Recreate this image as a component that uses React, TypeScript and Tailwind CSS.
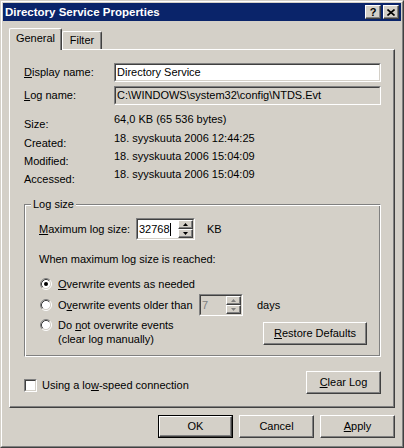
import type { ReactNode } from "react";

function Raised({ children, className = "" }: { children?: ReactNode; className?: string }) {
  return (
    <div
      className={`flex items-center justify-center border border-t-white border-l-white border-r-[#404040] border-b-[#404040] bg-[#d4d0c8] shadow-[inset_-1px_-1px_0_#808080] ${className}`}
    >
      {children}
    </div>
  );
}

function Button({ children, isDefault = false, className = "" }: { children: ReactNode; isDefault?: boolean; className?: string }) {
  if (isDefault) {
    return (
      <div className={`border border-black ${className}`}>
        <Raised className="h-full w-full">{children}</Raised>
      </div>
    );
  }
  return <Raised className={className}>{children}</Raised>;
}

function Sunken({ children, className = "", bg = "bg-white" }: { children?: ReactNode; className?: string; bg?: string }) {
  return (
    <div className={`border border-t-[#808080] border-l-[#808080] border-r-white border-b-white ${className}`}>
      <div className={`h-full w-full border border-t-[#404040] border-l-[#404040] border-r-[#d4d0c8] border-b-[#d4d0c8] ${bg}`}>
        {children}
      </div>
    </div>
  );
}

function Arrow({ up, color }: { up?: boolean; color: string }) {
  return (
    <svg width="5" height="3" viewBox="0 0 5 3">
      <path d={up ? "M2.5 0 L5 3 L0 3 Z" : "M0 0 L5 0 L2.5 3 Z"} fill={color} />
    </svg>
  );
}

function Spin({ value, disabled = false, caret = false, className = "" }: { value: string; disabled?: boolean; caret?: boolean; className?: string }) {
  const c = disabled ? "#808080" : "#000";
  return (
    <Sunken className={className} bg={disabled ? "bg-[#d4d0c8]" : "bg-white"}>
      <div className="flex h-full">
        <div className={`flex flex-1 items-center pl-px ${disabled ? "text-[#808080]" : ""}`}>
          {value}
          {caret && <span className="h-[13px] w-px bg-black" />}
        </div>
        <div className="flex w-[15px] flex-col">
          <Raised className="h-[9px]">
            <Arrow up color={c} />
          </Raised>
          <Raised className="h-[9px]">
            <Arrow color={c} />
          </Raised>
        </div>
      </div>
    </Sunken>
  );
}

function Radio({ checked = false }: { checked?: boolean }) {
  return (
    <svg width="12" height="12" viewBox="0 0 12 12" className="shrink-0">
      <circle cx="6" cy="6" r="4.5" fill="#fff" />
      <path d="M2.11 9.89 A5.5 5.5 0 0 1 9.89 2.11" fill="none" stroke="#808080" />
      <path d="M9.89 2.11 A5.5 5.5 0 0 1 2.11 9.89" fill="none" stroke="#fff" />
      <path d="M2.82 9.18 A4.5 4.5 0 0 1 9.18 2.82" fill="none" stroke="#404040" />
      <path d="M9.18 2.82 A4.5 4.5 0 0 1 2.82 9.18" fill="none" stroke="#d4d0c8" />
      {checked && <circle cx="6" cy="6" r="2" fill="#000" />}
    </svg>
  );
}

const info: [string, string, string][] = [
  ["Size:", "64,0 KB (65 536 bytes)", "h-[19px]"],
  ["Created:", "18. syyskuuta 2006 12:44:25", "h-[18px]"],
  ["Modified:", "18. syyskuuta 2006 15:04:09", "h-[18px]"],
  ["Accessed:", "18. syyskuuta 2006 15:04:09", "h-[19px]"],
];

export default function App() {
  return (
    <div className="h-[448px] w-[404px] border border-t-[#d4d0c8] border-l-[#d4d0c8] border-r-[#404040] border-b-[#404040] bg-[#d4d0c8] font-['Liberation_Sans',Arial,sans-serif] text-[11px] leading-[13px] text-black">
      <div className="flex h-full flex-col border border-t-white border-l-white border-r-[#808080] border-b-[#808080] p-px">
        {/* title bar */}
        <div className="flex h-[18px] items-center bg-[#0a246a] pl-[2px] pr-[2px]">
          <span className="text-[11.5px] font-bold text-white">Directory Service Properties</span>
          <div className="ml-auto flex gap-[2px]">
            <Raised className="h-[14px] w-[16px] text-[11px] font-bold leading-[11px]">?</Raised>
            <Raised className="h-[14px] w-[16px]">
              <svg width="8" height="7" viewBox="0 0 8 7">
                <path d="M0.5 0.5 L7.5 6.5 M7.5 0.5 L0.5 6.5" stroke="#000" strokeWidth="1.6" />
              </svg>
            </Raised>
          </div>
        </div>

        <div className="flex flex-1 flex-col px-[6px] pt-[7px]">
          {/* tabs */}
          <div className="flex h-[21px] items-end">
            <div className="relative z-10 -mb-px flex h-[22px] w-[53px] justify-center rounded-t-[2px] border-l border-t border-r border-l-white border-t-white border-r-[#404040] bg-[#d4d0c8] pt-[3px] shadow-[inset_-1px_0_0_#808080]">
              General
            </div>
            <div className="flex h-[18px] w-[40px] justify-center rounded-t-[2px] border-l border-t border-r border-l-white border-t-white border-r-[#404040] pt-[2px] shadow-[inset_-1px_0_0_#808080]">
              Filter
            </div>
          </div>

          {/* panel */}
          <div className="flex h-[359px] flex-col border border-t-white border-l-white border-r-[#404040] border-b-[#404040] pl-[14px] pr-[13px] pt-[13px] shadow-[inset_-1px_-1px_0_#808080]">
            <div className="flex h-[19px] items-center">
              <span className="w-[90px]">
                <u>D</u>isplay name:
              </span>
              <Sunken className="h-full flex-1">
                <div className="flex h-full items-center pl-px">Directory Service</div>
              </Sunken>
            </div>
            <div className="mt-[4px] flex h-[19px] items-center">
              <span className="w-[90px]">
                <u>L</u>og name:
              </span>
              <Sunken className="h-full flex-1" bg="bg-[#d4d0c8]">
                <div className="flex h-full items-center pl-px">C:\WINDOWS\system32\config\NTDS.Evt</div>
              </Sunken>
            </div>

            <div className="mt-[8px] flex flex-col">
              {info.map(([label, value, h]) => (
                <div key={label} className={`flex ${h}`}>
                  <span className="w-[90px] pt-[5px]">{label}</span>
                  <span>{value}</span>
                </div>
              ))}
            </div>

            {/* log size group */}
            <div className="relative mt-[17px] border border-t-[#808080] border-l-[#808080] border-r-white border-b-white pb-[10px] pl-[14px] pr-[13px] shadow-[inset_1px_1px_0_#fff,inset_-1px_-1px_0_#808080]">
              <span className="absolute left-[6px] top-[-7px] bg-[#d4d0c8] px-[2px]">Log size</span>

              <div className="mt-[13px] flex h-[22px] items-center">
                <span className="w-[97px]">
                  <u>M</u>aximum log size:
                </span>
                <Spin value="32768" caret className="h-full w-[59px]" />
                <span className="ml-[12px]">KB</span>
              </div>

              <div className="mt-[13px]">When maximum log size is reached:</div>

              <div className="mt-[8px] flex h-[20px] items-center">
                <span className="ml-px">
                  <Radio checked />
                </span>
                <span className="ml-[6px]">
                  <u>O</u>verwrite events as needed
                </span>
              </div>

              <div className="flex h-[22px] items-center">
                <span className="ml-px">
                  <Radio />
                </span>
                <span className="ml-[6px] w-[141px]">
                  O<u>v</u>erwrite events older than
                </span>
                <Spin value="7" disabled className="h-full w-[44px]" />
                <span className="ml-[14px]">days</span>
              </div>

              <div className="flex items-start">
                <div className="flex items-start pt-[2px]">
                  <span className="ml-px mt-px">
                    <Radio />
                  </span>
                  <span className="ml-[6px] leading-[14px]">
                    Do <u>n</u>ot overwrite events
                    <br />
                    (clear log manually)
                  </span>
                </div>
                <Button className="ml-auto mt-[6px] h-[23px] w-[104px]">
                  <span>
                    <u>R</u>estore Defaults
                  </span>
                </Button>
              </div>
            </div>

            <div className="mt-[14px] flex items-start">
              <div className="mt-[8px] flex h-[13px] items-center">
                <Sunken className="h-[13px] w-[13px]" />
                <span className="ml-[5px]">
                  Using a lo<u>w</u>-speed connection
                </span>
              </div>
              <Button className="ml-auto h-[23px] w-[75px]">
                <span>
                  <u>C</u>lear Log
                </span>
              </Button>
            </div>
          </div>

          {/* dialog buttons */}
          <div className="mt-[7px] flex justify-end gap-[6px]">
            <Button isDefault className="h-[23px] w-[75px]">
              OK
            </Button>
            <Button className="h-[23px] w-[75px]">Cancel</Button>
            <Button className="h-[23px] w-[75px]">
              <span>
                <u>A</u>pply
              </span>
            </Button>
          </div>
        </div>
      </div>
    </div>
  );
}
